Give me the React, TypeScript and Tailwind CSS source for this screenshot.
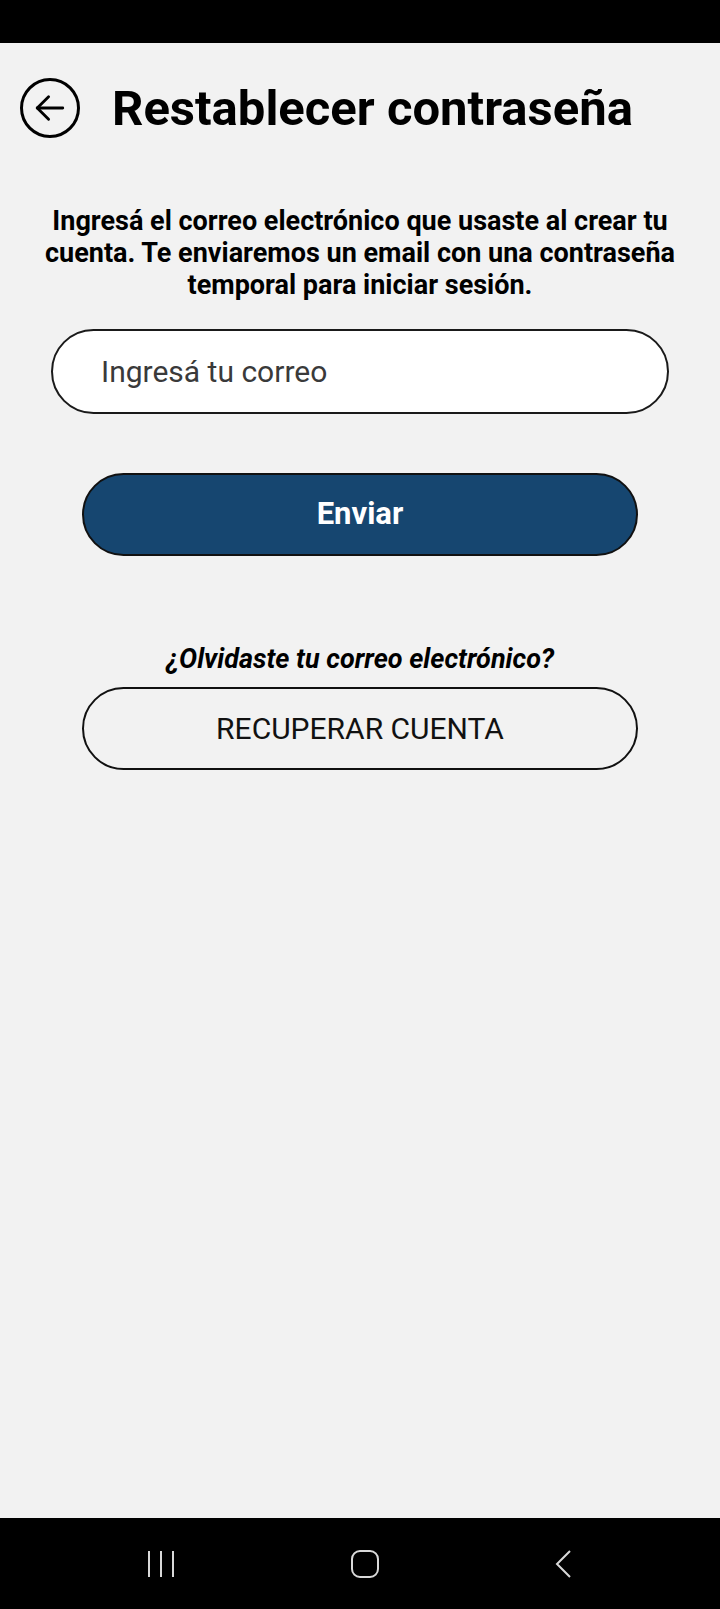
import React from "react";

const NavBar = () => (
  <div className="h-[91px] bg-black flex items-center justify-between pl-[147px] pr-[148px]">
    <svg width="28" height="30" viewBox="0 0 28 30" fill="none" stroke="#d9d9d9" strokeWidth="2">
      <line x1="2" y1="2" x2="2" y2="28" />
      <line x1="14" y1="2" x2="14" y2="28" />
      <line x1="26" y1="2" x2="26" y2="28" />
    </svg>
    <svg width="30" height="30" viewBox="0 0 30 30" fill="none" stroke="#d9d9d9" strokeWidth="2">
      <rect x="2" y="2" width="26" height="26" rx="8" />
    </svg>
    <svg width="18" height="30" viewBox="0 0 18 30" fill="none" stroke="#d9d9d9" strokeWidth="2">
      <polyline points="16,2 3,15 16,28" />
    </svg>
  </div>
);

export default function App() {
  return (
    <div
      className="min-h-screen flex flex-col bg-[#f2f2f2] text-black"
      style={{ fontFamily: "Roboto, 'Liberation Sans', sans-serif" }}
    >
      <div className="h-[43px] bg-black" />

      <div className="flex-1 flex flex-col">
        <div className="flex items-center pt-[35px] pl-[20px] gap-[32px]">
          <button className="w-[60px] h-[60px] rounded-full border-[3px] border-black flex items-center justify-center">
            <svg width="34" height="34" viewBox="0 0 24 24" fill="none" stroke="black" strokeWidth="2" strokeLinecap="round" strokeLinejoin="round">
              <line x1="21" y1="12" x2="3" y2="12" />
              <polyline points="11,4 3,12 11,20" />
            </svg>
          </button>
          <h1 className="text-[49px] font-bold leading-none">Restablecer contraseña</h1>
        </div>

        <p className="mt-[67px] text-center text-[27px] font-bold leading-[32px] whitespace-nowrap">
          Ingresá el correo electrónico que usaste al crear tu
          <br />
          cuenta. Te enviaremos un email con una contraseña
          <br />
          temporal para iniciar sesión.
        </p>

        <div className="mt-[28px] mx-[51px] h-[85px] rounded-full border-2 border-[#1a1a1a] bg-white flex items-center pl-[48px]">
          <input
            className="w-full bg-transparent outline-none text-[30px] text-[#3a3a3a] placeholder:text-[#3a3a3a]"
            placeholder="Ingresá tu correo"
          />
        </div>

        <button className="mt-[59px] mx-[82px] h-[83px] rounded-full border-2 border-[#111] bg-[#164670] text-white text-[31px] font-bold">
          Enviar
        </button>

        <p className="mt-[87px] text-center text-[27px] font-bold italic leading-[32px]">
          ¿Olvidaste tu correo electrónico?
        </p>

        <button className="mt-[12px] mx-[82px] h-[83px] rounded-full border-2 border-[#111] text-[30px] text-[#111]">
          RECUPERAR CUENTA
        </button>
      </div>

      <NavBar />
    </div>
  );
}
